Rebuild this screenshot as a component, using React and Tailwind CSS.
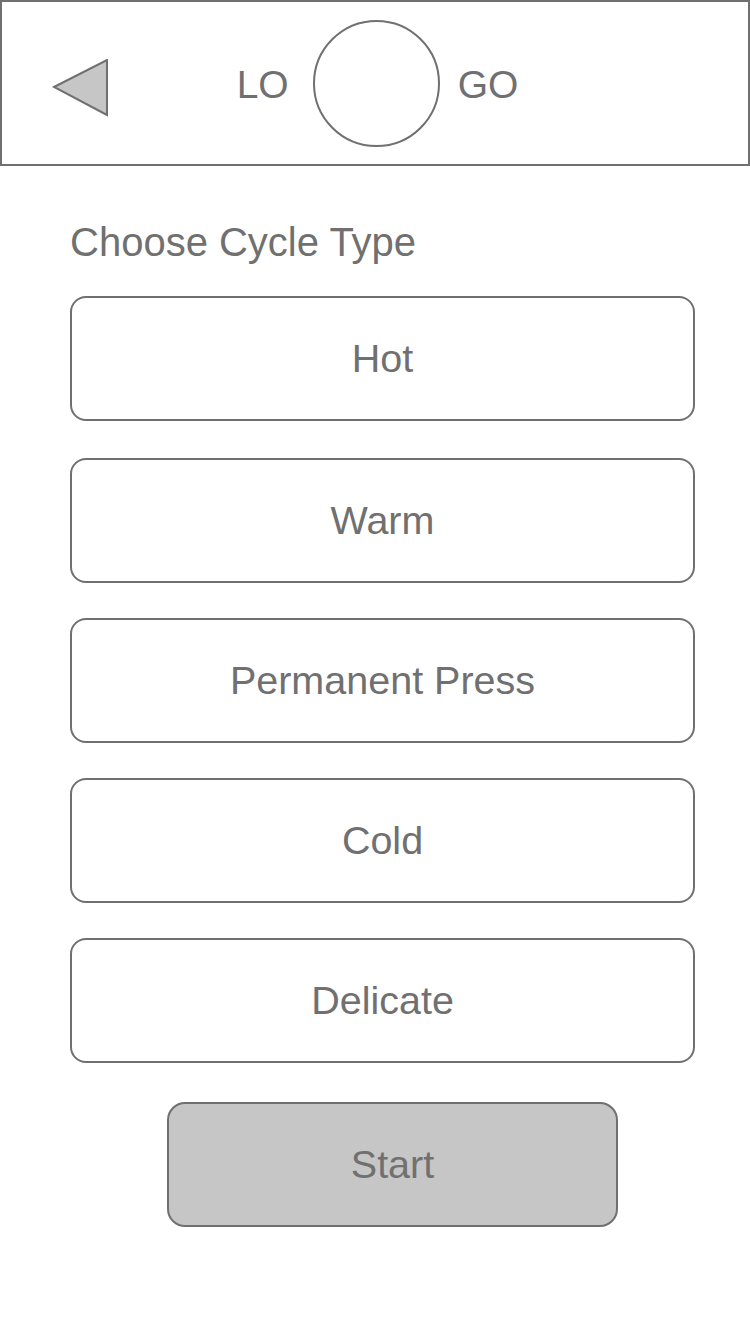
const cycles = ['Hot', 'Warm', 'Permanent Press', 'Cold', 'Delicate']

const BackArrow = () => (
  <svg width="58" height="60" viewBox="0 0 58 60">
    <polygon points="2,28 55,1 55,56" fill="#c6c6c6" stroke="#707070" strokeWidth="2" strokeLinejoin="miter" />
  </svg>
)

export default function App() {
  return (
    <div className="w-[750px] h-[1334px] bg-white text-[#707070] font-['Liberation_Sans',Arial,sans-serif]">
      {/* Header */}
      <div className="h-[166px] border-2 border-[#707070] grid grid-cols-[1fr_auto_1fr] items-center">
        <div className="pl-[50px] pt-[12px]">
          <BackArrow />
        </div>
        <div className="flex items-center pl-[5px]">
          <span className="text-[39px] leading-none pt-[2px] mr-[24px]">LO</span>
          <div className="w-[127px] h-[127px] rounded-full border-2 border-[#707070]" />
          <span className="text-[39px] leading-none pt-[2px] ml-[18px]">GO</span>
        </div>
        <div />
      </div>

      {/* Cycle options */}
      <div className="pl-[70px] pr-[55px] pt-[52px]">
        <h2 className="text-[40px] leading-[48px]">Choose Cycle Type</h2>
        <div className="mt-[30px] flex flex-col gap-[35px]">
          {cycles.map((c, i) => (
            <button
              key={c}
              className={`h-[125px] w-full rounded-[16px] border-2 border-[#707070] bg-white text-[39.5px] text-[#707070] flex items-center justify-center ${i === 0 ? 'mb-[2px]' : ''}`}
            >
              {c}
            </button>
          ))}
        </div>
        <div className="mt-[39px] flex pl-[97px]">
          <button className="h-[125px] w-[451px] rounded-[18px] border-2 border-[#707070] bg-[#c6c6c6] text-[39.5px] text-[#707070] flex items-center justify-center">
            Start
          </button>
        </div>
      </div>
    </div>
  )
}
